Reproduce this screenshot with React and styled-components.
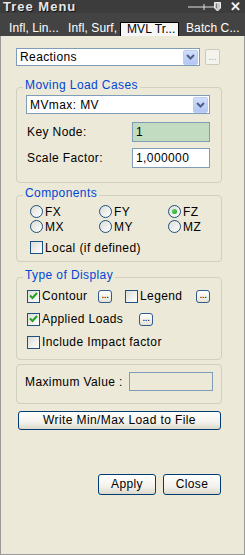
import React from 'react'
import styled, { createGlobalStyle } from 'styled-components'

const GlobalStyle = createGlobalStyle`
  html, body { margin: 0; padding: 0; background: #fff; }
  body {
    font-family: "Liberation Sans", Arial, sans-serif;
    font-size: 12px;
    letter-spacing: 0.4px;
    color: #000;
  }
`

const Window = styled.div`
  width: 245px;
  height: 555px;
  box-sizing: border-box;
  display: flex;
  flex-direction: column;
  background: #ece9d8;
  border: 1px solid #9a9a9a;
  border-top: none;
`

const TitleBar = styled.div`
  height: 13px;
  background: #3c3c3c;
  display: flex;
  align-items: center;
  padding: 0 4px 0 3px;
  margin: 0 -1px;
`

const Title = styled.div`
  flex: 1;
  color: #e6e6e6;
  font-weight: bold;
  font-size: 13px;
  letter-spacing: 1px;
  line-height: 13px;
  text-shadow: 1px 1px 0 #111;
`

const CloseX = styled.span`
  color: #f2f2f2;
  font-weight: bold;
  font-size: 13px;
  line-height: 13px;
  margin-left: 8px;
`

const TabStrip = styled.div`
  height: 23px;
  box-sizing: border-box;
  background: #434343;
  display: flex;
  align-items: flex-end;
  padding-left: 2px;
  margin: 0 -1px;
`

const Tab = styled.div`
  width: 59px;
  height: 14px;
  box-sizing: border-box;
  padding-left: ${p => (p.$active ? 6 : 7)}px;
  line-height: 12px;
  white-space: nowrap;
  letter-spacing: 0.1px;
  color: ${p => (p.$active ? '#000' : '#fff')};
  background: ${p => (p.$active ? '#f6f6f6' : 'transparent')};
  border: ${p => (p.$active ? '1px solid #000' : 'none')};
  border-bottom: none;
`

const Content = styled.div`
  flex: 1;
  display: flex;
  flex-direction: column;
  padding: 12px 22px 0 15px;
`

const Row = styled.div`
  display: flex;
  align-items: center;
`

const SelectBox = styled.div`
  width: ${p => p.$w}px;
  height: ${p => p.$h}px;
  margin-left: ${p => p.$ml || 0}px;
  margin-top: ${p => p.$mt || 0}px;
  box-sizing: border-box;
  border: 1px solid #7f9db9;
  background: #fff;
  display: flex;
  align-items: center;
  padding: 0 1px 0 3px;
`

const SelectText = styled.span`
  flex: 1;
  white-space: nowrap;
`

const Arrow = styled.span`
  width: 15px;
  height: ${p => p.$h}px;
  box-sizing: border-box;
  border-radius: 2px;
  border: 1px solid #b9cdf5;
  background: linear-gradient(#d2defb, #b3c7f5);
  display: flex;
  align-items: center;
  justify-content: center;
`

const DisabledDots = styled.div`
  width: 15px;
  height: 16px;
  box-sizing: border-box;
  margin-left: 5px;
  border: 1px solid #cdcabb;
  border-radius: 2px;
  background: #f4f3ee;
  color: #aca899;
  font-size: 10px;
  line-height: 14px;
  letter-spacing: 0;
  text-align: center;
`

const Group = styled.div`
  margin-top: ${p => p.$mt}px;
  border: 1px solid #d0d0bf;
  border-radius: 4px;
  padding: ${p => p.$pad};
  display: flex;
  flex-direction: column;
`

const Legend = styled.div`
  margin: -10px 0 0 6px;
  width: fit-content;
  height: 14px;
  line-height: 14px;
  padding: 0 2px;
  background: #ece9d8;
  color: #0046d5;
`

const FieldRow = styled.div`
  display: flex;
  align-items: center;
  margin-top: ${p => p.$mt}px;
  padding-left: 10px;
`

const Label = styled.span`
  width: ${p => p.$w}px;
  white-space: nowrap;
`

const Field = styled.div`
  width: ${p => p.$w}px;
  height: ${p => p.$h}px;
  box-sizing: border-box;
  border: 1px solid #7f9db9;
  background: ${p => p.$bg || '#fff'};
  padding-left: 3px;
  line-height: ${p => p.$h - 2}px;
`

const RadioGrid = styled.div`
  display: grid;
  grid-template-columns: 69px 69px auto;
  grid-auto-rows: 15px;
  margin-top: 4px;
  padding-left: 13px;
`

const Option = styled.label`
  display: flex;
  align-items: center;
  gap: 2px;
  white-space: nowrap;
  width: ${p => (p.$w ? `${p.$w}px` : 'auto')};
  margin-left: ${p => p.$ml || 0}px;
  height: ${p => p.$h || 15}px;
`

const RadioCircle = styled.span`
  width: 13px;
  height: 13px;
  box-sizing: border-box;
  border-radius: 50%;
  border: 1px solid #1c5180;
  background: linear-gradient(135deg, #dcdcd7, #fff);
  display: flex;
  align-items: center;
  justify-content: center;
`

const Dot = styled.span`
  width: 5px;
  height: 5px;
  border-radius: 50%;
  background: radial-gradient(circle at 35% 35%, #5ed25e, #1a9a1a);
`

const Box = styled.span`
  width: 13px;
  height: 13px;
  box-sizing: border-box;
  border: 1px solid #1c5180;
  background: linear-gradient(135deg, #dcdcd7, #fff);
  display: flex;
  align-items: center;
  justify-content: center;
  flex: none;
`

const Checks = styled.div`
  display: flex;
  flex-direction: column;
  gap: 7px;
  margin-top: 6px;
  padding-left: ${p => p.$pl || 10}px;
`

const DotsButton = styled.span`
  width: 14px;
  height: 13px;
  box-sizing: border-box;
  border: 1px solid #2e5a8e;
  border-radius: 3px;
  background: linear-gradient(#fff, #e6e3d6);
  font-size: 10px;
  line-height: 7px;
  text-align: center;
  letter-spacing: -0.5px;
  flex: none;
`

const MaxRow = styled.div`
  display: flex;
  align-items: center;
  justify-content: space-between;
`

const Button = styled.div`
  width: ${p => p.$w}px;
  height: ${p => p.$h}px;
  box-sizing: border-box;
  border: 1px solid #003c74;
  border-radius: 3px;
  background: linear-gradient(#ffffff 0%, #f3f2ec 60%, #dcd8cb 100%);
  text-align: center;
  line-height: ${p => p.$h - 2}px;
  white-space: nowrap;
`

const WriteButton = styled(Button)`
  margin: 7px 0 0 2px;
`

const Footer = styled.div`
  display: flex;
  justify-content: flex-end;
  gap: 7px;
  margin: 44px 1px 0 0;
`

const Chevron = () => (
  <svg width="9" height="6" viewBox="0 0 9 6">
    <path d="M1 1 L4.5 4.5 L8 1" fill="none" stroke="#4d6185" strokeWidth="2" />
  </svg>
)

const PinIcon = () => (
  <svg width="34" height="11" viewBox="0 0 34 11">
    <path d="M0 6 H26" stroke="#e0e0e0" strokeWidth="1" />
    <path d="M16 3 V9" stroke="#e0e0e0" strokeWidth="1" />
    <path d="M26.5 1.5 H32.5 V7 L29.5 10 L26.5 7 Z" fill="#c8c8c8" stroke="#f0f0f0" strokeWidth="1" />
    <path d="M28.5 2.5 V7" stroke="#777" strokeWidth="1" />
  </svg>
)

const Tick = () => (
  <svg width="9" height="8" viewBox="0 0 9 8">
    <path d="M1 3.5 L3.5 6 L8 1" fill="none" stroke="#21a121" strokeWidth="2" />
  </svg>
)

const Radio = ({ label, checked }) => (
  <Option>
    <RadioCircle>{checked && <Dot />}</RadioCircle>
    {label}
  </Option>
)

const Check = ({ label, checked, w, ml, h }) => (
  <Option $w={w} $ml={ml} $h={h}>
    <Box>{checked && <Tick />}</Box>
    {label}
  </Option>
)

const Select = ({ text, w, h, ml, mt }) => (
  <SelectBox $w={w} $h={h} $ml={ml} $mt={mt}>
    <SelectText>{text}</SelectText>
    <Arrow $h={h - 3}>
      <Chevron />
    </Arrow>
  </SelectBox>
)

const App = () => (
  <Window>
    <GlobalStyle />
    <TitleBar>
      <Title>Tree Menu</Title>
      <PinIcon />
      <CloseX>✕</CloseX>
    </TitleBar>
    <TabStrip>
      <Tab>Infl, Lin...</Tab>
      <Tab>Infl, Surf,</Tab>
      <Tab $active>MVL Tr...</Tab>
      <Tab>Batch C...</Tab>
    </TabStrip>
    <Content>
      <Row>
        <Select text="Reactions" w={184} h={18} />
        <DisabledDots>...</DisabledDots>
      </Row>

      <Group $mt={21} $pad="0 0 14px 0">
        <Legend>Moving Load Cases</Legend>
        <Select text="MVmax: MV" w={184} h={19} ml={9} mt={3} />
        <FieldRow $mt={8}>
          <Label $w={105}>Key Node:</Label>
          <Field $w={78} $h={20} $bg="#c1dcc1">1</Field>
        </FieldRow>
        <FieldRow $mt={6}>
          <Label $w={105}>Scale Factor:</Label>
          <Field $w={78} $h={20}>1,000000</Field>
        </FieldRow>
      </Group>

      <Group $mt={12} $pad="0 0 6px 0">
        <Legend>Components</Legend>
        <RadioGrid>
          <Radio label="FX" />
          <Radio label="FY" />
          <Radio label="FZ" checked />
          <Radio label="MX" />
          <Radio label="MY" />
          <Radio label="MZ" />
        </RadioGrid>
        <Checks $pl={13}>
          <Check label="Local (if defined)" />
        </Checks>
      </Group>

      <Group $mt={15} $pad="0 0 9px 0">
        <Legend>Type of Display</Legend>
        <Checks>
          <Row>
            <Check label="Contour" checked w={71} h={16} />
            <DotsButton>...</DotsButton>
            <Check label="Legend" w={71} ml={13} h={16} />
            <DotsButton>...</DotsButton>
          </Row>
          <Row>
            <Check label="Applied Loads" checked w={112} h={16} />
            <DotsButton>...</DotsButton>
          </Row>
          <Row>
            <Check label="Include Impact factor" h={16} />
          </Row>
        </Checks>
      </Group>

      <Group $mt={4} $pad="7px 8px 12px 8px">
        <MaxRow>
          <span>Maximum Value :</span>
          <Field $w={84} $h={19} $bg="#ece9d8" />
        </MaxRow>
      </Group>

      <WriteButton $w={203} $h={19}>Write Min/Max Load to File</WriteButton>

      <Footer>
        <Button $w={58} $h={21}>Apply</Button>
        <Button $w={58} $h={21}>Close</Button>
      </Footer>
    </Content>
  </Window>
)

export default App
